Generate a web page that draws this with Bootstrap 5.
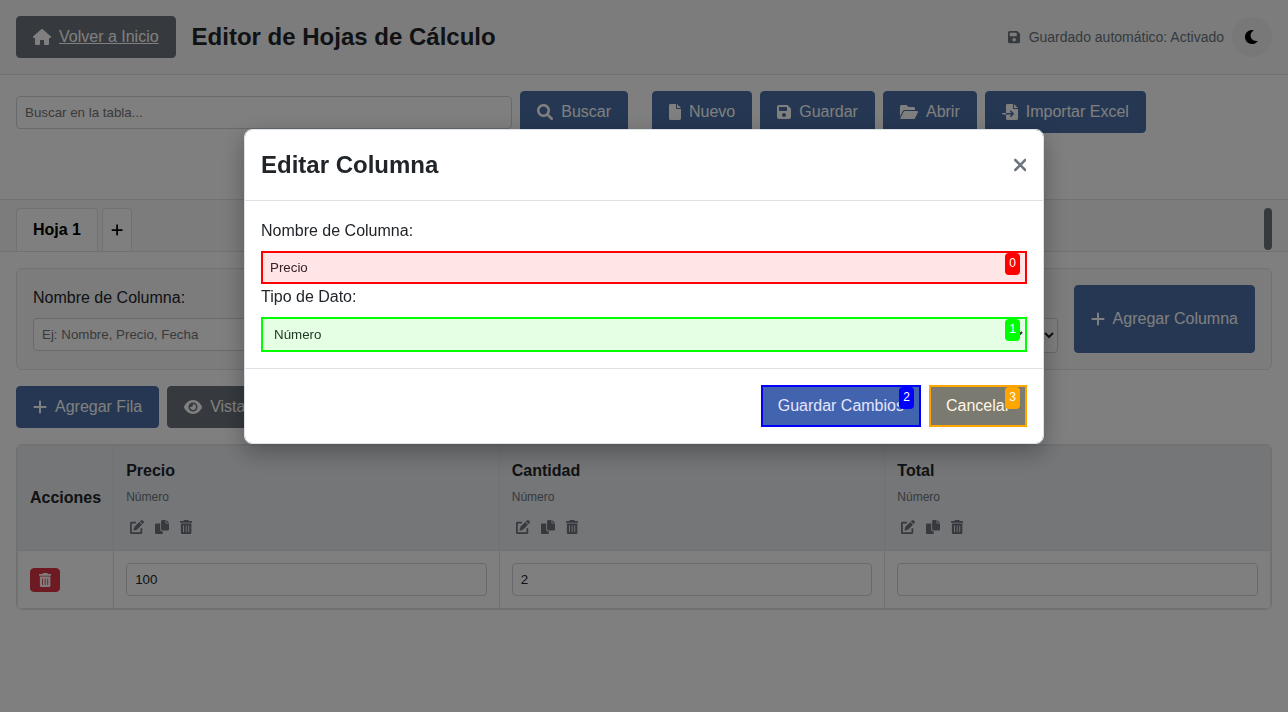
<!DOCTYPE html>
<html lang="es">
<head>
<meta charset="utf-8">
<meta name="viewport" content="width=device-width, initial-scale=1">
<title>Editor de Hojas de Cálculo</title>
<link href="https://cdn.jsdelivr.net/npm/bootstrap@5.3.0/dist/css/bootstrap.min.css" rel="stylesheet">
<style>
  :root { --primary: #4a6fa5; --line: #dee2e6; --field: #ced4da; --muted: #6c757d; }
  body { font-family: "Liberation Sans", Arial, sans-serif; color: #212529; background: #fff; overflow: hidden; }
  h1, h2 { font-size: 24px; font-weight: 700; line-height: 38px; margin: 0; }
  .ico { height: 1em; width: auto; fill: currentColor; display: block; flex: none; }
  .btn { display: inline-flex; align-items: center; justify-content: center; gap: 8px; padding: 8px 16px; border-radius: 4px; white-space: nowrap; }
  .btn-primary { --bs-btn-bg: var(--primary); --bs-btn-border-color: var(--primary); }
  .btn-secondary { --bs-btn-bg: #6c757d; --bs-btn-border-color: #6c757d; }
  .btn-danger { padding: 4px 8px; height: 24px; font-size: 14px; }
  .field { display: block; width: 100%; padding: 8px; font-size: revert; line-height: 15px; border: 1px solid var(--field); border-radius: 4px; background: #fff; color: #212529; }
  .field::placeholder { color: #757575; }
  select.field { height: 35px; line-height: normal; }
  .caption { display: block; line-height: 25px; margin-bottom: 8px; }
  .topbar { background: #f8f9fa; border-bottom: 1px solid var(--line); }
  .autosave { font-size: 14px; color: var(--muted); }
  .theme { width: 40px; height: 40px; background: #f1f1f1; color: #000; }
  .tools { border-bottom: 1px solid var(--line); padding-bottom: 66px; }
  .finder { flex: 1 1 0; }
  .filebuttons { flex: 0 0 620px; }
  .sheets { background: #f8f9fa; border-bottom: 1px solid var(--line); padding: 8px 16px 0; }
  .sheet { border: 1px solid var(--line); border-bottom: 0; border-radius: 4px 4px 0 0; background: #fff; height: 43px; padding: 0 16px; }
  .sheet-add { padding: 0 8px; font-size: 14px; color: #000; }
  .thumb { width: 8px; height: 42px; border-radius: 4px; background: var(--muted); }
  .panel { background: #f8f9fa; border: 1px solid var(--line); border-radius: 6px; padding: 16px; }
  .grid { border: 1px solid var(--line); border-radius: 6px; overflow: hidden; }
  .grid table { width: 100%; border-collapse: collapse; }
  .grid th, .grid td { border: 1px solid var(--line); padding: 12px; vertical-align: middle; text-align: left; }
  .grid th { background: #e9ecef; }
  .grid th:first-child { width: 96px; }
  .colname { line-height: 26px; }
  .coltype { font-size: 12px; line-height: 18px; font-weight: 400; color: var(--muted); margin: 4px 0 10px; }
  .mini { border: 0; background: none; padding: 4px; font-size: 14px; color: var(--muted); }
  .mini + .mini { margin-left: 3px; }
  .modal { background: rgba(0, 0, 0, .5); }
  .modal-dialog { max-width: 800px; margin: 129px auto 0; }
  .modal-content { border: 1px solid var(--line); border-radius: 8px; box-shadow: 0 8px 24px rgba(0, 0, 0, .3); color: #212529; }
  .modal-header { padding: 16px; border-color: var(--line); }
  .modal-body { padding: 17px 16px 16px; }
  .modal-footer { padding: 16px; gap: 8px; border-color: var(--line); }
  .modal-footer > * { margin: 0; }
  .dismiss { border: 0; background: none; padding: 0 1px; font-size: 20px; color: var(--muted); }
  .hint { position: absolute; inset: 0; border: 2px solid var(--c); pointer-events: none; }
  .btn .hint { inset: -1px; }
  .hint::before { content: ""; position: absolute; inset: 0; background: var(--c); opacity: .1; }
  .hint span { position: absolute; top: 0; right: 5px; padding: 1px 4px 3px; background: var(--c); color: #fff; font-size: 12px; line-height: 18px; border-radius: 4px; }
  .hint-red { --c: #f00; } .hint-green { --c: #0f0; } .hint-blue { --c: #00f; } .hint-orange { --c: #ffa500; }
</style>
</head>
<body>
<svg class="d-none" aria-hidden="true">
  <symbol id="home" viewBox="0 0 576 512"><path d="M575.8 255.5c0 18-15 32.1-32 32.1h-32l.7 160.2c0 2.7-.2 5.4-.5 8.1V472c0 22.1-17.9 40-40 40H392c-22.1 0-40-17.9-40-40V384c0-17.7-14.3-32-32-32H256c-17.7 0-32 14.3-32 32v88c0 22.1-17.9 40-40 40H104c-22.1 0-40-17.9-40-40V287.6H32c-18 0-32-14-32-32.1c0-9 3-17 10-24L266.4 8c7-7 15-8 22-8s15 2 21 7L564.8 231.5c8 7 12 15 11 24z"/></symbol>
  <symbol id="save" viewBox="0 0 448 512"><path d="M433.1 129.1l-83.9-83.9C342.3 38.3 327.1 32 316.1 32H64C28.7 32 0 60.7 0 96v320c0 35.3 28.7 64 64 64h320c35.3 0 64-28.7 64-64V163.9C448 152.9 439.7 135.7 433.1 129.1zM224 416c-35.3 0-64-28.7-64-64s28.7-64 64-64s64 28.7 64 64S259.3 416 224 416zM320 208C320 216.8 312.8 224 304 224h-224C71.2 224 64 216.8 64 208v-96C64 103.2 71.2 96 80 96h224C312.8 96 320 103.2 320 112V208z"/></symbol>
  <symbol id="moon" viewBox="0 0 512 512"><path d="M32 256c0-123.8 100.3-224 223.8-224c11.4 0 29.7 1.7 40.9 3.7c9.6 1.8 11.8 14.6 3.3 19.5C245 86.500 211.200 144.600 211.200 207.800c0 109.700 99.700 193 208.300 172.300c9.600-1.800 16.300 9.300 10.100 16.900C387.900 448.600 324.800 480 255.800 480C131.100 480 32 379.600 32 256z"/></symbol>
  <symbol id="search" viewBox="0 0 512 512"><path d="M500.3 443.7l-119.7-119.7c27.2-40.4 40.7-90.900 33.500-144.700C401.800 87.800 326.800 13.300 235.300 1.700C99-15.500-15.500 99 1.700 235.300c11.600 91.500 86.100 166.500 177.600 178.700c53.800 7.200 104.300-6.200 144.700-33.500l119.700 119.700c15.600 15.600 41 15.600 56.600 0C515.900 484.700 515.900 459.300 500.300 443.700zM79.100 208c0-70.600 57.400-128 128-128s128 57.400 128 128c0 70.600-57.400 128-128 128S79.100 278.600 79.100 208z"/></symbol>
  <symbol id="file" viewBox="0 0 384 512"><path d="M256 0v128h128L256 0zM224 128L224 0H48C21.5 0 0 21.5 0 48v416C0 490.5 21.5 512 48 512h288c26.5 0 48-21.5 48-48V160h-127.1C238.3 160 224 145.7 224 128z"/></symbol>
  <symbol id="folder" viewBox="0 0 576 512"><path d="M147.8 192H480V144C480 117.5 458.5 96 432 96h-160l-64-64h-160C21.5 32 0 53.5 0 80v328.4l90.5-181.1C101.4 205.6 123.4 192 147.8 192zM543.1 224H147.8C135.7 224 124.6 230.8 119.2 241.7L0 480h447.1c12.1 0 23.2-6.8 28.6-17.7l96-192C582.3 249 566.8 224 543.1 224z"/></symbol>
  <symbol id="import" viewBox="0 0 512 512"><path d="M384 0v128h128L384 0zM352 128L352 0H176C149.5 0 128 21.5 128 48V288h174.1l-39-39c-9.4-9.4-9.4-24.6 0-33.9s24.6-9.4 33.9 0l80 80c9.4 9.4 9.4 24.6 0 33.9l-80 80c-9.4 9.4-24.6 9.4-33.9 0s-9.4-24.6 0-33.9l39-39H128v128C128 490.5 149.5 512 176 512h288c26.5 0 48-21.5 48-48V160h-127.1C366.3 160 352 145.7 352 128zM24 288C10.7 288 0 298.7 0 312S10.7 336 24 336H128v-48H24z"/></symbol>
  <symbol id="plus" viewBox="0 0 448 512"><path d="M256 80c0-17.7-14.3-32-32-32s-32 14.3-32 32V224H48c-17.7 0-32 14.3-32 32s14.3 32 32 32H192V432c0 17.7 14.3 32 32 32s32-14.3 32-32V288H400c17.7 0 32-14.3 32-32s-14.3-32-32-32H256V80z"/></symbol>
  <symbol id="eye" viewBox="0 0 576 512"><path d="M288 32c-80.8 0-145.5 36.8-192.6 80.6C48.6 156 17.3 208 2.5 243.7c-3.3 7.9-3.3 16.7 0 24.6C17.3 304 48.6 356 95.4 399.4C142.5 443.2 207.2 480 288 480s145.5-36.8 192.6-80.6c46.8-43.5 78.1-95.4 93-131.1c3.3-7.9 3.3-16.7 0-24.6c-14.9-35.7-46.2-87.7-93-131.1C433.5 68.8 368.8 32 288 32zM144 256a144 144 0 1 1 288 0 144 144 0 1 1 -288 0zm144-64c0 35.3-28.7 64-64 64c-7.1 0-13.9-1.2-20.3-3.3c-5.5-1.8-11.9 1.6-11.7 7.4c.3 6.9 1.3 13.8 3.2 20.7c13.7 51.2 66.4 81.6 117.6 67.9s81.6-66.4 67.9-117.6c-11.1-41.5-47.8-69.4-88.6-71.1c-5.8-.2-9.2 6.1-7.4 11.7c2.1 6.4 3.3 13.2 3.3 20.3z"/></symbol>
  <symbol id="edit" viewBox="0 0 512 512"><path d="M490.3 40.4C512.2 62.3 512.2 97.7 490.3 119.6L460.3 149.7 362.3 51.7 392.4 21.7C414.3-.2 449.7-.2 471.6 21.7L490.3 40.4zM172.4 241.7L339.7 74.3 437.7 172.3 270.3 339.6C264.2 345.8 256.7 350.4 248.4 353.2L159.6 382.8C150.1 385.6 141.5 383.4 135 376.1C128.6 370.5 126.4 361 129.2 352.4L158.8 263.6C161.6 255.4 166.2 247.9 172.4 241.7zM192 64C209.7 64 224 78.3 224 96S209.7 128 192 128H64V448H384V320C384 302.3 398.3 288 416 288S448 302.3 448 320V456C448 487 423 512 392 512H56C25 512 0 487 0 456V120C0 89 25 64 56 64H192z"/></symbol>
  <symbol id="copy" viewBox="0 0 512 512"><path d="M384 96V0h-112c-26.5 0-48 21.5-48 48v288c0 26.5 21.5 48 48 48H464c26.5 0 48-21.5 48-48V128h-95.1C398.4 128 384 113.6 384 96zM416 0v96h96L416 0zM192 352V128h-144c-26.5 0-48 21.5-48 48v288c0 26.5 21.5 48 48 48h192c26.5 0 48-21.5 48-48V416h-32C220.7 416 192 387.3 192 352z"/></symbol>
  <symbol id="trash" viewBox="0 0 448 512"><path d="M16 32H128L139.600 8.800C142.300 3.400 147.800 0 153.900 0H294.100C300.200 0 305.700 3.400 308.400 8.800L320 32H432A16 16 0 0 1 448 48V80A16 16 0 0 1 432 96H16A16 16 0 0 1 0 80V48A16 16 0 0 1 16 32z"/><path fill-rule="evenodd" d="M32 128H416V464A48 48 0 0 1 368 512H80A48 48 0 0 1 32 464zM304 208a16 16 0 0 1 32 0V432a16 16 0 0 1-32 0zM208 208a16 16 0 0 1 32 0V432a16 16 0 0 1-32 0zM112 208a16 16 0 0 1 32 0V432a16 16 0 0 1-32 0z"/></symbol>
  <symbol id="close" viewBox="0 0 320 512"><path d="M310.600 361.400c12.500 12.500 12.500 32.800 0 45.300C304.400 412.900 296.200 416 288 416s-16.400-3.100-22.600-9.400L160 301.300L54.600 406.600C48.400 412.900 40.200 416 32 416S15.600 412.900 9.400 406.600c-12.500-12.500-12.500-32.800 0-45.300l105.400-105.400L9.400 150.600c-12.500-12.500-12.500-32.800 0-45.300s32.800-12.500 45.300 0L160 210.800l105.400-105.400c12.500-12.500 32.800-12.500 45.300 0s12.500 32.800 0 45.300l-105.400 105.400L310.600 361.400z"/></symbol>
</svg>

<header class="topbar d-flex align-items-center justify-content-between p-3">
  <div class="d-flex align-items-center gap-3">
    <a href="#" class="btn btn-secondary"><svg class="ico" viewBox="0 0 576 512"><use href="#home"/></svg><span class="text-decoration-underline">Volver a Inicio</span></a>
    <h1>Editor de Hojas de Cálculo</h1>
  </div>
  <div class="d-flex align-items-center gap-2">
    <div class="autosave d-flex align-items-center gap-2"><svg class="ico" viewBox="0 0 448 512"><use href="#save"/></svg><span>Guardado automático: Activado</span></div>
    <button type="button" class="theme border-0 rounded-circle d-flex align-items-center justify-content-center p-0" aria-label="Modo oscuro"><svg class="ico" viewBox="0 0 512 512"><use href="#moon"/></svg></button>
  </div>
</header>

<section class="tools d-flex px-3 pt-3 gap-4">
  <div class="finder d-flex align-items-center gap-2">
    <input class="field" type="text" placeholder="Buscar en la tabla..." aria-label="Buscar en la tabla">
    <button type="button" class="btn btn-primary"><svg class="ico" viewBox="0 0 512 512"><use href="#search"/></svg>Buscar</button>
  </div>
  <div class="filebuttons d-flex gap-2">
    <button type="button" class="btn btn-primary"><svg class="ico" viewBox="0 0 384 512"><use href="#file"/></svg>Nuevo</button>
    <button type="button" class="btn btn-primary"><svg class="ico" viewBox="0 0 448 512"><use href="#save"/></svg>Guardar</button>
    <button type="button" class="btn btn-primary"><svg class="ico" viewBox="0 0 576 512"><use href="#folder"/></svg>Abrir</button>
    <button type="button" class="btn btn-primary"><svg class="ico" viewBox="0 0 512 512"><use href="#import"/></svg>Importar Excel</button>
  </div>
</section>

<nav class="sheets d-flex gap-1" aria-label="Hojas">
  <button type="button" class="sheet fw-bold">Hoja 1</button>
  <button type="button" class="sheet sheet-add" aria-label="Nueva hoja"><svg class="ico" viewBox="0 0 448 512"><use href="#plus"/></svg></button>
  <div class="thumb ms-auto"></div>
</nav>

<main class="p-3">
  <section class="panel d-flex gap-3 mb-3">
    <div class="flex-fill w-50">
      <label class="caption" for="newname">Nombre de Columna:</label>
      <input class="field" id="newname" type="text" placeholder="Ej: Nombre, Precio, Fecha">
    </div>
    <div class="flex-fill w-50">
      <label class="caption" for="newtype">Tipo de Dato:</label>
      <select class="field" id="newtype"><option>Texto</option></select>
    </div>
    <button type="button" class="btn btn-primary"><svg class="ico" viewBox="0 0 448 512"><use href="#plus"/></svg>Agregar Columna</button>
  </section>

  <div class="d-flex gap-2 mb-3">
    <button type="button" class="btn btn-primary"><svg class="ico" viewBox="0 0 448 512"><use href="#plus"/></svg>Agregar Fila</button>
    <button type="button" class="btn btn-secondary"><svg class="ico" viewBox="0 0 576 512"><use href="#eye"/></svg>Vista Previa</button>
  </div>

  <div class="grid">
    <table>
      <thead>
        <tr>
          <th>Acciones</th>
          <th>
            <div class="colname">Precio</div><div class="coltype">Número</div>
            <div class="d-flex"><button type="button" class="mini" aria-label="Editar"><svg class="ico" viewBox="0 0 512 512"><use href="#edit"/></svg></button><button type="button" class="mini" aria-label="Duplicar"><svg class="ico" viewBox="0 0 512 512"><use href="#copy"/></svg></button><button type="button" class="mini" aria-label="Eliminar"><svg class="ico" viewBox="0 0 448 512"><use href="#trash"/></svg></button></div>
          </th>
          <th>
            <div class="colname">Cantidad</div><div class="coltype">Número</div>
            <div class="d-flex"><button type="button" class="mini" aria-label="Editar"><svg class="ico" viewBox="0 0 512 512"><use href="#edit"/></svg></button><button type="button" class="mini" aria-label="Duplicar"><svg class="ico" viewBox="0 0 512 512"><use href="#copy"/></svg></button><button type="button" class="mini" aria-label="Eliminar"><svg class="ico" viewBox="0 0 448 512"><use href="#trash"/></svg></button></div>
          </th>
          <th>
            <div class="colname">Total</div><div class="coltype">Número</div>
            <div class="d-flex"><button type="button" class="mini" aria-label="Editar"><svg class="ico" viewBox="0 0 512 512"><use href="#edit"/></svg></button><button type="button" class="mini" aria-label="Duplicar"><svg class="ico" viewBox="0 0 512 512"><use href="#copy"/></svg></button><button type="button" class="mini" aria-label="Eliminar"><svg class="ico" viewBox="0 0 448 512"><use href="#trash"/></svg></button></div>
          </th>
        </tr>
      </thead>
      <tbody>
        <tr>
          <td><button type="button" class="btn btn-danger" aria-label="Eliminar fila"><svg class="ico" viewBox="0 0 448 512"><use href="#trash"/></svg></button></td>
          <td><input class="field" type="text" value="100" aria-label="Precio"></td>
          <td><input class="field" type="text" value="2" aria-label="Cantidad"></td>
          <td><input class="field" type="text" aria-label="Total"></td>
        </tr>
      </tbody>
    </table>
  </div>
</main>

<div class="modal d-block" role="dialog" aria-modal="true" aria-labelledby="dialogtitle">
  <div class="modal-dialog">
    <div class="modal-content">
      <div class="modal-header">
        <h2 id="dialogtitle">Editar Columna</h2>
        <button type="button" class="dismiss" aria-label="Cerrar"><svg class="ico" viewBox="0 0 320 512"><use href="#close"/></svg></button>
      </div>
      <div class="modal-body">
        <label class="caption" for="colname">Nombre de Columna:</label>
        <div class="position-relative">
          <input class="field" id="colname" type="text" value="Precio">
          <div class="hint hint-red"><span>0</span></div>
        </div>
        <label class="caption" for="coltype">Tipo de Dato:</label>
        <div class="position-relative">
          <select class="field" id="coltype"><option>Número</option></select>
          <div class="hint hint-green"><span>1</span></div>
        </div>
      </div>
      <div class="modal-footer">
        <button type="button" class="btn btn-primary position-relative">Guardar Cambios<span class="hint hint-blue"><span>2</span></span></button>
        <button type="button" class="btn btn-secondary position-relative">Cancelar<span class="hint hint-orange"><span>3</span></span></button>
      </div>
    </div>
  </div>
</div>
<script src="https://cdn.jsdelivr.net/npm/bootstrap@5.3.0/dist/js/bootstrap.bundle.min.js"></script>
</body>
</html>
